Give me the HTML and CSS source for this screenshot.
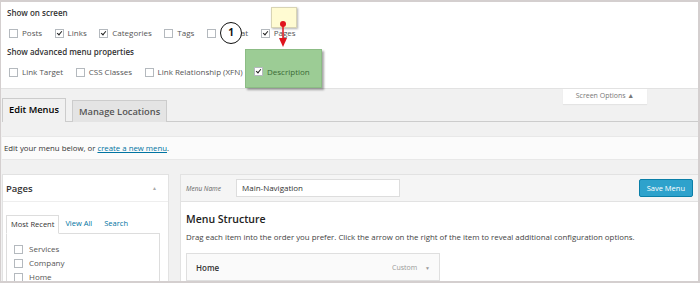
FILE: index.html
```html
<!DOCTYPE html>
<html>
<head>
  <title>Menus</title>
  <link rel="stylesheet" href="styles.css">
</head>
<body>
  <div class="frame">
    <div class="screen-meta">
      <h5>Show on screen</h5>
      <div class="opts">
        <label><span class="cb"></span>Posts</label>
        <label><span class="cb on"></span>Links</label>
        <label><span class="cb on"></span>Categories</label>
        <label><span class="cb"></span>Tags</label>
        <label><span class="cb"></span><span class="hidden-part">at</span></label>
        <label><span class="cb on"></span>Pages</label>
      </div>
      <h5>Show advanced menu properties</h5>
      <div class="opts">
        <label><span class="cb"></span>Link Target</label>
        <label><span class="cb"></span>CSS Classes</label>
        <label><span class="cb"></span>Link Relationship (XFN)</label>
      </div>
      <div class="highlight"><label><span class="cb on"></span>Description</label></div>
      <div class="step">1</div>
      <div class="note"></div>
      <svg class="pointer" width="12" height="30" viewBox="0 0 12 30">
        <circle cx="6" cy="3" r="3" fill="#e0141e"/>
        <line x1="6" y1="3" x2="6" y2="18" stroke="#e0141e" stroke-width="1.5"/>
        <polygon points="2,17 10,17 6,26" fill="#e0141e"/>
      </svg>
    </div>

    <div class="wrap">
      <div class="meta-links"><span class="meta-tab">Screen Options &#9650;</span></div>
      <div class="nav-tabs">
        <a class="nav-tab active">Edit Menus</a>
        <a class="nav-tab">Manage Locations</a>
      </div>
      <div class="manage-menus">Edit your menu below, or <a href="#">create a new menu</a>.</div>

      <div class="columns">
        <div class="side">
          <div class="box">
            <div class="box-head"><span>Pages</span><span class="toggle">&#9650;</span></div>
            <div class="box-body">
              <div class="tabs">
                <span class="tab active">Most Recent</span>
                <span class="tab">View All</span>
                <span class="tab">Search</span>
              </div>
              <div class="tab-panel">
                <label><span class="cb"></span>Services</label>
                <label><span class="cb"></span>Company</label>
                <label><span class="cb"></span>Home</label>
              </div>
            </div>
          </div>
        </div>

        <div class="menu-edit">
          <div class="menu-head">
            <span class="name-label">Menu Name</span>
            <span class="name-input">Main-Navigation</span>
            <span class="save">Save Menu</span>
          </div>
          <div class="menu-body">
            <h3>Menu Structure</h3>
            <p>Drag each item into the order you prefer. Click the arrow on the right of the item to reveal additional configuration options.</p>
            <div class="menu-item">
              <span class="item-title">Home</span>
              <span class="item-type">Custom <span class="caret">&#9660;</span></span>
            </div>
          </div>
        </div>
      </div>
    </div>
  </div>
</body>
</html>
```

FILE: styles.css
```css
body {
  margin: 0;
  font-family: "Open Sans", sans-serif;
  color: #333;
  background-color: #fff;
}
.frame {
  width: 700px;
  height: 283px;
  box-sizing: border-box;
  border: 2px solid #d4cfcf;
  border-left-width: 1px;
  overflow: hidden;
  background-color: #f1f1f1;
}
.screen-meta {
  position: relative;
  background-color: #fff;
  border-bottom: 1px solid #e2e2e2;
  padding: 5px 6px 8px 5px;
  height: 73px;
}
.screen-meta h5 {
  margin: 0 0 0 1px;
  font-size: 8px;
  line-height: 12px;
  font-weight: 600;
}
.opts {
  display: flex;
  gap: 0 9.5px;
  margin: 7px 0 6px;
  height: 14px;
  align-items: center;
}
label {
  display: flex;
  align-items: center;
  font-size: 8px;
  line-height: 14px;
  color: #555;
}
.hidden-part {
  padding-left: 21px;
}
.cb {
  width: 9px;
  height: 9px;
  box-sizing: border-box;
  border: 1px solid #b4b9be;
  background-color: #fff;
  margin: 0 4px 0 3px;
  position: relative;
}
.cb.on::after {
  content: "";
  position: absolute;
  left: 2px;
  top: 0;
  width: 2px;
  height: 4px;
  border: solid #222;
  border-width: 0 1.5px 1.5px 0;
  transform: rotate(40deg);
}
.highlight {
  position: absolute;
  left: 244px;
  top: 47px;
  width: 77px;
  height: 39px;
  box-sizing: border-box;
  background-color: #9ccc95;
  border: 1px solid #8cbc85;
  box-shadow: 2px 2px 2px rgba(0, 0, 0, 0.35);
  display: flex;
  align-items: center;
  padding: 6px 0 0 5px;
}
.highlight label {
  color: #3b6a35;
}
.step {
  position: absolute;
  left: 219px;
  top: 20px;
  width: 22px;
  height: 22px;
  box-sizing: border-box;
  border: 1.5px solid #111;
  border-radius: 50%;
  background-color: #fff;
  font-size: 10px;
  font-weight: 700;
  line-height: 19px;
  text-align: center;
  color: #111;
}
.note {
  position: absolute;
  left: 270px;
  top: 5px;
  width: 24px;
  height: 19px;
  background-color: #fffbd2;
  border: 1px solid #d8d4b4;
  box-shadow: 1px 1px 2px rgba(0, 0, 0, 0.3);
}
.pointer {
  position: absolute;
  left: 276px;
  top: 19px;
}
.wrap {
  padding: 0 0 0 1px;
}
.meta-links {
  display: flex;
  justify-content: flex-end;
  padding-right: 51px;
  height: 10px;
}
.meta-tab {
  background-color: #fff;
  font-size: 7px;
  color: #777;
  width: 84px;
  height: 15px;
  line-height: 14px;
  text-align: center;
  box-shadow: 0 1px 1px rgba(0, 0, 0, 0.05);
  position: relative;
  z-index: 1;
}
.nav-tabs {
  display: flex;
  gap: 6px;
  border-bottom: 1px solid #ccc;
  height: 22px;
  align-items: flex-end;
}
.nav-tab {
  font-size: 9.3px;
  font-weight: 600;
  line-height: 21px;
  padding: 0 6px;
  border: 1px solid #ccc;
  border-bottom: none;
  background-color: #e4e4e4;
  color: #555;
  margin-bottom: -1px;
}
.nav-tab.active {
  background-color: #f1f1f1;
  color: #000;
  height: 23px;
}
.manage-menus {
  margin-top: 14px;
  background-color: #fbfbfb;
  border-top: 1px solid #e8e8e8;
  border-bottom: 1px solid #e8e8e8;
  font-size: 7.8px;
  line-height: 22px;
  padding-left: 2px;
}
.manage-menus a {
  color: #0074a2;
}
.columns {
  display: flex;
  gap: 11px;
  margin-top: 14px;
}
.side {
  width: 167px;
}
.box {
  background-color: #fff;
  border: 1px solid #e2e2e2;
}
.box-head {
  display: flex;
  justify-content: space-between;
  align-items: center;
  height: 26px;
  padding: 0 11px 0 3px;
  font-size: 9.5px;
  font-weight: 600;
  border-bottom: 1px solid #eee;
}
.toggle {
  font-size: 5px;
  color: #aaa;
}
.box-body {
  padding: 13px 8px 0 3px;
}
.tabs {
  display: flex;
  font-size: 7.5px;
  line-height: 17px;
}
.tab {
  color: #0074a2;
  padding: 0 6px;
}
.tab.active {
  color: #333;
  border: 1px solid #ddd;
  border-bottom: 1px solid #fff;
  margin-bottom: -1px;
  padding: 0 4px;
}
.tab-panel {
  border: 1px solid #ddd;
  padding: 8px 0 0 4px;
  height: 60px;
}
.tab-panel label {
  line-height: 14px;
  font-size: 8px;
  color: #555;
}
.tab-panel .cb {
  margin-right: 6px;
}
.menu-edit {
  flex: 1;
  background-color: #fff;
  border: 1px solid #e2e2e2;
  border-right: none;
}
.menu-head {
  display: flex;
  align-items: center;
  height: 26px;
  background-color: #f5f5f5;
  border-bottom: 1px solid #e2e2e2;
  padding: 0 5px;
}
.name-label {
  font-size: 6.5px;
  font-style: italic;
  color: #666;
  width: 50px;
}
.name-input {
  width: 157px;
  height: 16px;
  border: 1px solid #ddd;
  background-color: #fff;
  font-size: 8px;
  line-height: 16px;
  padding-left: 5px;
}
.save {
  margin-left: auto;
  background-color: #2ea2cc;
  border: 1px solid #0a7fa8;
  border-radius: 2px;
  color: #fff;
  font-size: 7.5px;
  line-height: 16px;
  padding: 0 7px;
}
.menu-body {
  padding: 9px 5px 0;
}
.menu-body h3 {
  margin: 0;
  font-size: 10.5px;
  font-weight: 600;
  line-height: 16px;
  color: #222;
}
.menu-body p {
  margin: 3px 0 0;
  font-size: 7.85px;
  line-height: 14px;
  color: #444;
}
.menu-item {
  margin-top: 9px;
  width: 254px;
  height: 28px;
  box-sizing: border-box;
  border: 1px solid #dfdfdf;
  background-color: #fafafa;
  display: flex;
  align-items: center;
  justify-content: space-between;
  padding: 0 9px 0 9px;
}
.item-title {
  font-size: 8px;
  font-weight: 600;
}
.item-type {
  font-size: 7px;
  color: #999;
}
.caret {
  font-size: 5px;
  margin-left: 6px;
}
```
